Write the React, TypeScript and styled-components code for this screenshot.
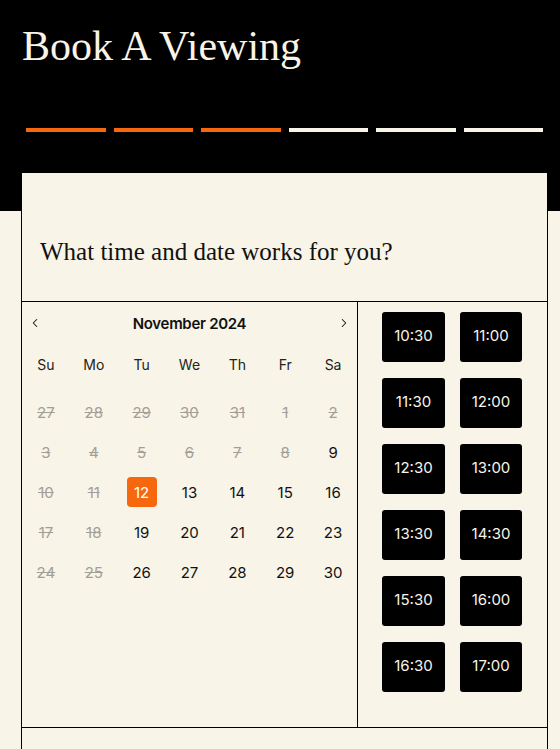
import React from "react";
import styled, { createGlobalStyle } from "styled-components";
import { ChevronLeft, ChevronRight } from "lucide-react";

const CREAM = "#f8f4e7";
const ORANGE = "#f7670d";

const GlobalStyle = createGlobalStyle`
  html, body { margin: 0; padding: 0; background: ${CREAM}; }
  * { box-sizing: border-box; }
`;

const Page = styled.div`
  min-height: 749px;
  background: linear-gradient(to bottom, #000 0, #000 211px, ${CREAM} 211px);
  overflow: hidden;
`;

const Title = styled.h1`
  margin: 0;
  padding: 21px 0 0 22px;
  font-family: "Liberation Serif", "DejaVu Serif", serif;
  font-weight: 400;
  font-size: 42px;
  line-height: 50px;
  color: ${CREAM};
`;

const Progress = styled.div`
  display: grid;
  grid-template-columns: repeat(6, 1fr);
  column-gap: 8px;
  padding: 0 17px 0 26px;
  margin-top: 57px;
`;

const Segment = styled.div<{ $done: boolean }>`
  height: 4px;
  background: ${(p) => (p.$done ? ORANGE : CREAM)};
`;

const Card = styled.section`
  margin: 41px 12px 0 21px;
  background: ${CREAM};
  border-left: 1px solid #000;
  border-right: 1px solid #000;
  min-height: 600px;
`;

const CardHead = styled.div`
  padding: 64px 18px 34px;
  border-bottom: 1px solid #000;
`;

const Question = styled.h2`
  margin: 0;
  font-family: "Liberation Serif", "DejaVu Serif", serif;
  font-weight: 400;
  font-size: 25px;
  line-height: 30px;
  color: #111;
`;

const Body = styled.div`
  display: grid;
  grid-template-columns: 336px 1fr;
  border-bottom: 1px solid #000;
`;

const CalendarPanel = styled.div`
  border-right: 1px solid #000;
  font-family: Inter, "Liberation Sans", sans-serif;
  color: #111;
`;

const Nav = styled.div`
  height: 42px;
  display: flex;
  align-items: center;
  justify-content: space-between;
  padding: 0 6px;
`;

const NavButton = styled.button`
  border: 0;
  background: none;
  padding: 0;
  display: flex;
  color: #111;
  cursor: pointer;
`;

const Month = styled.div`
  font-size: 15px;
  font-weight: 600;
  letter-spacing: -0.3px;
`;

const WeekRow = styled.div`
  display: grid;
  grid-template-columns: repeat(7, 1fr);
  height: 40px;
  align-items: center;
`;

const WeekDay = styled.div`
  text-align: center;
  font-size: 14px;
  color: #222;
`;

const DaysGrid = styled.div`
  display: grid;
  grid-template-columns: repeat(7, 1fr);
  grid-auto-rows: 40px;
  margin-top: 8px;
`;

const DayCell = styled.div`
  display: flex;
  align-items: center;
  justify-content: center;
`;

const Day = styled.div<{ $disabled?: boolean; $selected?: boolean }>`
  width: 30px;
  height: 30px;
  border-radius: 4px;
  display: flex;
  align-items: center;
  justify-content: center;
  font-size: 15px;
  color: ${(p) => (p.$selected ? "#fff" : p.$disabled ? "#a39f97" : "#111")};
  background: ${(p) => (p.$selected ? ORANGE : "transparent")};
  text-decoration: ${(p) => (p.$disabled ? "line-through" : "none")};
`;

const TimesPanel = styled.div`
  padding: 10px 25px 35px 24px;
`;

const TimesGrid = styled.div`
  display: grid;
  grid-template-columns: 63px 62px;
  grid-auto-rows: 50px;
  column-gap: 15px;
  row-gap: 16px;
`;

const TimeButton = styled.button`
  border: 0;
  border-radius: 3px;
  background: #000;
  color: ${CREAM};
  font-family: Inter, "Liberation Sans", sans-serif;
  font-size: 15px;
  padding: 0 0 3px;
  cursor: pointer;
`;

const Footer = styled.div`
  height: 200px;
`;

type DayItem = { n: number; disabled: boolean; selected?: boolean };

const days: DayItem[] = [
  ...[27, 28, 29, 30, 31].map((n) => ({ n, disabled: true })),
  ...Array.from({ length: 30 }, (_, i) => {
    const n = i + 1;
    return {
      n,
      disabled: n <= 8 || n === 10 || n === 11 || n === 17 || n === 18 || n === 24 || n === 25,
      selected: n === 12,
    };
  }),
];

const weekdays = ["Su", "Mo", "Tu", "We", "Th", "Fr", "Sa"];
const times = ["10:30", "11:00", "11:30", "12:00", "12:30", "13:00", "13:30", "14:30", "15:30", "16:00", "16:30", "17:00"];

export default function App() {
  return (
    <Page>
      <GlobalStyle />
      <Title>Book A Viewing</Title>
      <Progress>
        {[0, 1, 2, 3, 4, 5].map((i) => (
          <Segment key={i} $done={i < 3} />
        ))}
      </Progress>
      <Card>
        <CardHead>
          <Question>What time and date works for you?</Question>
        </CardHead>
        <Body>
          <CalendarPanel>
            <Nav>
              <NavButton aria-label="Previous month">
                <ChevronLeft size={14} strokeWidth={1.8} />
              </NavButton>
              <Month>November 2024</Month>
              <NavButton aria-label="Next month">
                <ChevronRight size={14} strokeWidth={1.8} />
              </NavButton>
            </Nav>
            <WeekRow>
              {weekdays.map((w) => (
                <WeekDay key={w}>{w}</WeekDay>
              ))}
            </WeekRow>
            <DaysGrid>
              {days.map((d, i) => (
                <DayCell key={i}>
                  <Day $disabled={d.disabled} $selected={d.selected}>
                    {d.n}
                  </Day>
                </DayCell>
              ))}
            </DaysGrid>
          </CalendarPanel>
          <TimesPanel>
            <TimesGrid>
              {times.map((t) => (
                <TimeButton key={t}>{t}</TimeButton>
              ))}
            </TimesGrid>
          </TimesPanel>
        </Body>
        <Footer />
      </Card>
    </Page>
  );
}
